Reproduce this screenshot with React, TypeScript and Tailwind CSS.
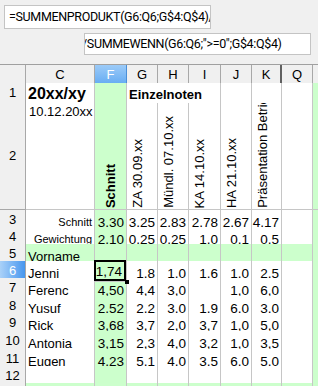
import React from 'react';

const COLS = 'grid grid-cols-[26px_69px_32px_31px_31px_32px_31px_30px_31px_5px]';
const LINE = 'border-r border-b border-[#c6c6c6]';
const GREEN = 'bg-[#ccffcc]';

type RowProps = { h: string; children: React.ReactNode };

function Row({ h, children }: RowProps) {
  return <div className={`${COLS} ${h}`}>{children}</div>;
}

function RowHead({ n, active }: { n: string; active?: boolean }) {
  return (
    <div
      className={`flex items-center justify-center border-r border-b border-[#a8a8a8] text-[13px] ${
        active ? 'bg-linear-to-r from-[#a9d1f8] to-[#4596ee] text-white' : 'bg-[#f0f0f0] text-black'
      }`}
    >
      {n}
    </div>
  );
}

function Cell({ children, className = '' }: { children?: React.ReactNode; className?: string }) {
  return <div className={`${LINE} flex items-end overflow-hidden whitespace-nowrap ${className}`}>{children}</div>;
}

function Num({ v, green }: { v: string; green?: boolean }) {
  return <Cell className={`justify-end pr-[2px] text-[13.5px] leading-[15px] ${green ? GREEN : 'bg-white'}`}>{v}</Cell>;
}

function Vertical({ text, bold, center }: { text: string; bold?: boolean; center?: boolean }) {
  return (
    <div
      className={`${LINE} flex h-full flex-col justify-end overflow-hidden pb-[1px] ${
        center ? `items-center ${GREEN}` : 'items-start pl-[3px] bg-white'
      }`}
    >
      <span
        className={`shrink-0 rotate-180 whitespace-nowrap text-[13px] leading-[15px] [writing-mode:vertical-rl] ${
          bold ? 'font-bold text-[12.5px]' : ''
        }`}
      >
        {text}
      </span>
    </div>
  );
}

const students = [
  { n: '6', h: 'h-[17px]', d: ['Jenni', '1,74', '1,8', '1,0', '1,6', '1,0', '2,5'] },
  { n: '7', h: 'h-[18px]', d: ['Ferenc', '4,50', '4,4', '3,0', '', '1,0', '6,0'] },
  { n: '8', h: 'h-[17px]', d: ['Yusuf', '2,52', '2,2', '3,0', '1,9', '6,0', '3,0'] },
  { n: '9', h: 'h-[18px]', d: ['Rick', '3,68', '3,7', '2,0', '3,7', '1,0', '5,0'] },
  { n: '10', h: 'h-[18px]', d: ['Antonia', '3,15', '2,3', '4,0', '3,2', '1,0', '3,5'] },
  { n: '11', h: 'h-[17px]', d: ['Eugen', '4,23', '5,1', '4,0', '3,5', '6,0', '5,0'] },
];

const headers = ['G', 'H', 'I', 'J', 'K'];

export default function App() {
  return (
    <div className="h-[386px] w-[318px] overflow-hidden bg-white font-['Liberation_Sans',Arial,sans-serif] text-black">
      {/* formula bar */}
      <div className="h-[65px] border-b border-[#a0a0a0] bg-[#f0f0f0] pt-[5px] font-['Roboto',sans-serif] text-[12.5px] tracking-[-0.35px]">
        <div className="ml-[4px] flex h-[24px] w-[207px] items-center overflow-hidden whitespace-nowrap border border-[#c4c4c4] bg-white pl-[4px]">
          =SUMMENPRODUKT(G6:Q6;G$4:Q$4)/
        </div>
        <div className="ml-[84px] mt-[4px] flex h-[22px] w-[227px] items-center overflow-hidden whitespace-nowrap border border-[#c4c4c4] bg-white">
          <span className="-ml-[3px]">/SUMMEWENN(G6:Q6;"&gt;=0";G$4:Q$4)</span>
        </div>
      </div>

      {/* column headers */}
      <Row h="h-[18px]">
        <div className="border-r border-b border-[#a8a8a8] bg-[#f0f0f0]" />
        <div className="flex items-center justify-center border-r border-b border-[#a8a8a8] bg-[#f0f0f0] text-[13px]">C</div>
        <div className="flex items-center justify-center border-r border-b border-[#4a8fd8] bg-linear-to-b from-[#9ccbf8] to-[#62aaf2] text-[13px] text-white">
          F
        </div>
        {headers.map((h, i) => (
          <div
            key={h}
            className={`flex items-center justify-center border-b border-[#a8a8a8] bg-[#f0f0f0] text-[13px] ${
              i === 4 ? 'border-r-2 border-r-[#606060]' : 'border-r'
            }`}
          >
            {h}
          </div>
        ))}
        <div className="flex items-center justify-center border-r border-b border-[#a8a8a8] bg-[#f0f0f0] text-[13px]">Q</div>
        <div className="border-b border-[#a8a8a8] bg-[#f0f0f0]" />
      </Row>

      {/* row 1 */}
      <Row h="h-[20px]">
        <RowHead n="1" />
        <Cell className="bg-white pl-[2px] text-[16px] font-bold leading-[19px]">20xx/xy</Cell>
        <Cell className={GREEN} />
        <Cell className="col-span-3 bg-white pl-[2px] text-[13px] font-bold leading-[17px]">Einzelnoten</Cell>
        <Cell className="bg-white" />
        <Cell className="bg-white" />
        <Cell className="bg-white" />
        <div className={`border-b border-[#c6c6c6] ${GREEN}`} />
      </Row>

      {/* row 2 */}
      <Row h="h-[107px]">
        <RowHead n="2" />
        <div className={`${LINE} bg-white pl-[3px] pt-[1px] text-[13px] leading-[15px]`}>10.12.20xx</div>
        <Vertical text="Schnitt" bold center />
        <Vertical text="ZA 30.09.xx" />
        <Vertical text="Mündl. 07.10.xx" />
        <Vertical text="KA 14.10.xx" />
        <Vertical text="HA 21.10.xx" />
        <Vertical text="Präsentation Betrieb" />
        <Cell className="bg-white" />
        <div className={`border-b border-[#c6c6c6] ${GREEN}`} />
      </Row>

      {/* row 3 */}
      <Row h="h-[17px]">
        <RowHead n="3" />
        <Cell className="justify-end bg-white pb-[1px] pr-[2px] text-[11px] leading-[13px]">Schnitt</Cell>
        <Num v="3,30" green />
        <Num v="3,25" />
        <Num v="2,83" />
        <Num v="2,78" />
        <Num v="2,67" />
        <Num v="4,17" />
        <Cell className="bg-white" />
        <div className={`border-b border-[#c6c6c6] ${GREEN}`} />
      </Row>

      {/* row 4 */}
      <Row h="h-[17px]">
        <RowHead n="4" />
        <Cell className="justify-end bg-white pb-[1px] pr-[2px] text-[11px] leading-[13px]">Gewichtung</Cell>
        <Num v="2,10" green />
        <Num v="0,25" />
        <Num v="0,25" />
        <Num v="1,0" />
        <Num v="0,1" />
        <Num v="0,5" />
        <Cell className="bg-white" />
        <div className={`border-b border-[#c6c6c6] ${GREEN}`} />
      </Row>

      {/* row 5 */}
      <Row h="h-[17px]">
        <RowHead n="5" />
        <Cell className={`${GREEN} pl-[2px] text-[13px] leading-[15px]`}>Vorname</Cell>
        {[0, 1, 2, 3, 4, 5, 6].map((i) => (
          <Cell key={i} className={GREEN} />
        ))}
        <div className={`border-b border-[#c6c6c6] ${GREEN}`} />
      </Row>

      {/* students */}
      {students.map((s) => (
        <Row key={s.n} h={s.h}>
          <RowHead n={s.n} active={s.n === '6'} />
          <Cell className="bg-white pl-[2px] text-[13px] leading-[15px]">{s.d[0]}</Cell>
          {s.n === '6' ? (
            <div className={`relative border-b border-r border-[#c6c6c6] ${GREEN}`}>
              <div className="-ml-px -mt-px flex h-[calc(100%+1px)] w-[calc(100%+1px)] items-end justify-end border-2 border-black pr-[2px] text-[13.5px] leading-[14px]">
                {s.d[1]}
              </div>
              <div className="absolute -bottom-[3px] -right-[3px] h-[4px] w-[4px] bg-black" />
            </div>
          ) : (
            <Num v={s.d[1]} green />
          )}
          <Num v={s.d[2]} />
          <Num v={s.d[3]} />
          <Num v={s.d[4]} />
          <Num v={s.d[5]} />
          <Num v={s.d[6]} />
          <Cell className="bg-white" />
          <div className={`border-b border-[#c6c6c6] ${GREEN}`} />
        </Row>
      ))}

      {/* row 12 */}
      <Row h="h-[17px]">
        <RowHead n="12" />
        <Cell className="bg-white" />
        <Cell className={GREEN} />
        {[0, 1, 2, 3, 4, 5].map((i) => (
          <Cell key={i} className="bg-white" />
        ))}
        <div className={`border-b border-[#c6c6c6] ${GREEN}`} />
      </Row>

      {/* row 13 (cut off) */}
      <Row h="h-[10px]">
        <div className="border-r border-[#a8a8a8] bg-[#f0f0f0]" />
        {[0, 1, 2, 3, 4, 5, 6, 7].map((i) => (
          <div key={i} className={`border-r border-[#c6c6c6] ${GREEN}`} />
        ))}
        <div className={GREEN} />
      </Row>
    </div>
  );
}
